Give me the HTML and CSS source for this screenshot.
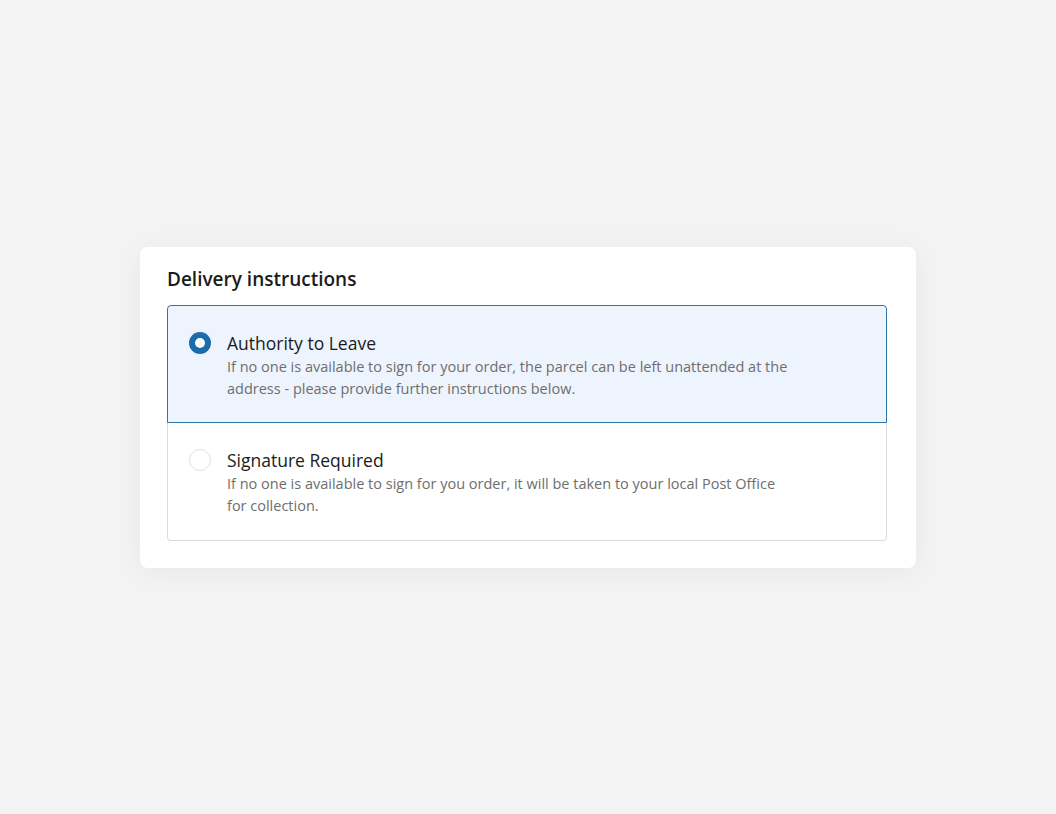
FILE: index.html
```html
<!DOCTYPE html>
<html>
<head>
<meta charset="utf-8">
<link rel="stylesheet" href="styles.css">
</head>
<body>
<main class="page">
  <section class="card">
    <h2 class="title">Delivery instructions</h2>
    <div class="options">
      <label class="option selected">
        <span class="radio checked"></span>
        <span class="text">
          <span class="label">Authority to Leave</span>
          <span class="desc">If no one is available to sign for your order, the parcel can be left unattended at the address - please provide further instructions below.</span>
        </span>
      </label>
      <label class="option">
        <span class="radio"></span>
        <span class="text">
          <span class="label">Signature Required</span>
          <span class="desc">If no one is available to sign for you order, it will be taken to your local Post Office for collection.</span>
        </span>
      </label>
    </div>
  </section>
</main>
</body>
</html>
```
FILE: styles.css
```css
html, body {
  margin: 0;
  padding: 0;
  height: 100%;
}
body {
  background: #f3f3f3;
  font-family: "Open Sans", "Noto Sans", sans-serif;
  color: #1b1b1b;
}
.page {
  height: 100%;
  display: flex;
  align-items: center;
  justify-content: center;
}
.card {
  width: 776px;
  box-sizing: border-box;
  background: #fff;
  border-radius: 8px;
  padding: 20px 29px 27px 27px;
  box-shadow: 0 4px 30px rgba(0, 0, 0, 0.05);
}
.title {
  margin: 0 0 13px;
  font-size: 19px;
  font-weight: 600;
  line-height: 25px;
  color: #1b1b1b;
}
.options {
  display: flex;
  flex-direction: column;
}
.option {
  display: flex;
  align-items: flex-start;
  gap: 16px;
  height: 118px;
  box-sizing: border-box;
  padding: 25px 21px 0;
  border: 1px solid #dcdcdc;
}
.option:first-child {
  border-radius: 4px 4px 0 0;
}
.option:last-child {
  border-radius: 0 0 4px 4px;
  border-top: none;
}
.option.selected {
  background: #eef4fd;
  border-color: #2f74ad;
}
.radio {
  flex: none;
  width: 22px;
  height: 22px;
  box-sizing: border-box;
  border-radius: 50%;
  border: 1px solid #e2e2e2;
  background: #fff;
  margin-top: 1px;
}
.radio.checked {
  background: #fff;
  border: 6.5px solid #1a6daa;
}
.text {
  display: flex;
  flex-direction: column;
  max-width: 570px;
}
.label {
  font-size: 17.5px;
  font-weight: 500;
  line-height: 24px;
  color: #1b1b1b;
}
.desc {
  margin-top: 1px;
  font-size: 14.5px;
  line-height: 22px;
  color: #6e6e6e;
}
```
